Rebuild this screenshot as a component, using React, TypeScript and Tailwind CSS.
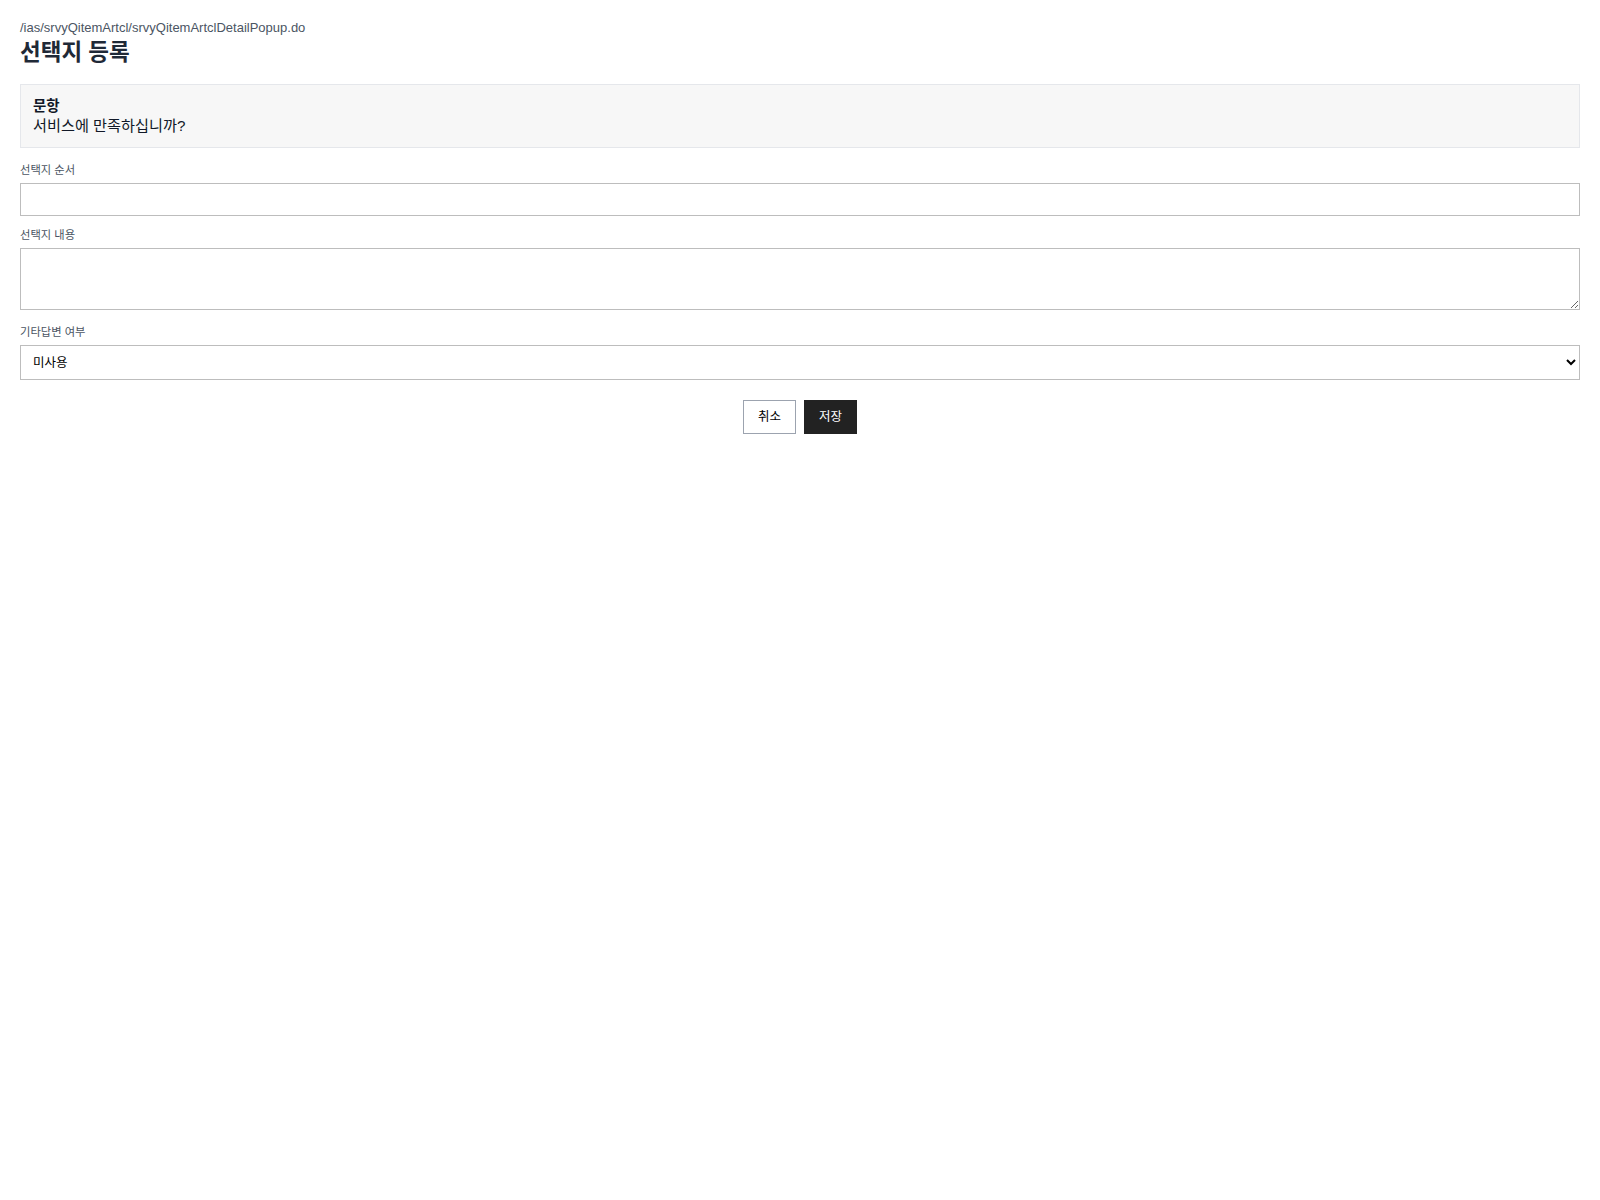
import { useState } from "react";

const font = { fontFamily: '"Liberation Sans", "Noto Sans CJK KR", sans-serif' };

export default function App() {
  const [order, setOrder] = useState("");
  const [content, setContent] = useState("");
  const [etcYn, setEtcYn] = useState("N");

  return (
    <main className="min-h-screen bg-white px-5 pt-[20px] text-[#111827]" style={font}>
      {/* HEADER */}
      <div className="text-[13px] leading-[16px] text-[#4b5563]">/ias/srvyQitemArtcl/srvyQitemArtclDetailPopup.do</div>
      <h1 className="mt-[2px] text-[22.5px] font-bold leading-[30px] text-[#1f2937]">선택지 등록</h1>

      {/* QUESTION */}
      <div className="mt-[16px] border border-[#e5e7eb] bg-[#f7f7f7] px-3 pt-[12px] pb-[12px]">
        <div className="text-[14.5px] font-bold leading-[19px]">문항</div>
        <div className="text-[15.2px] leading-[19px]">서비스에 만족하십니까?</div>
      </div>

      {/* FORM */}
      <div className="mt-[15px] flex flex-col">
        <label className="text-[11.3px] leading-[15px] text-[#4b5563]">선택지 순서</label>
        <input
          value={order}
          onChange={(e) => setOrder(e.target.value)}
          className="mt-[5px] h-[33px] w-full border border-[#bdbdbd] px-3 text-[13px] outline-none"
        />

        <label className="mt-[12px] text-[11.3px] leading-[15px] text-[#4b5563]">선택지 내용</label>
        <textarea
          value={content}
          onChange={(e) => setContent(e.target.value)}
          className="mt-[5px] h-[62px] w-full resize-y border border-[#bdbdbd] px-3 py-2 text-[13px] outline-none"
        />

        <label className="mt-[15px] text-[11.3px] leading-[15px] text-[#4b5563]">기타답변 여부</label>
        <select
          value={etcYn}
          onChange={(e) => setEtcYn(e.target.value)}
          className="mt-[5px] h-[35px] w-full border border-[#bdbdbd] bg-white px-2 text-[12.5px] text-black outline-none"
        >
          <option value="N">미사용</option>
          <option value="Y">사용</option>
        </select>
      </div>

      {/* BUTTONS */}
      <div className="mt-[20px] flex justify-center gap-2">
        <button className="h-[34px] w-[53px] border border-[#9ca3af] bg-white text-[12.5px] text-black">취소</button>
        <button className="h-[34px] w-[53px] bg-[#222222] text-[12.5px] text-white">저장</button>
      </div>
    </main>
  );
}
